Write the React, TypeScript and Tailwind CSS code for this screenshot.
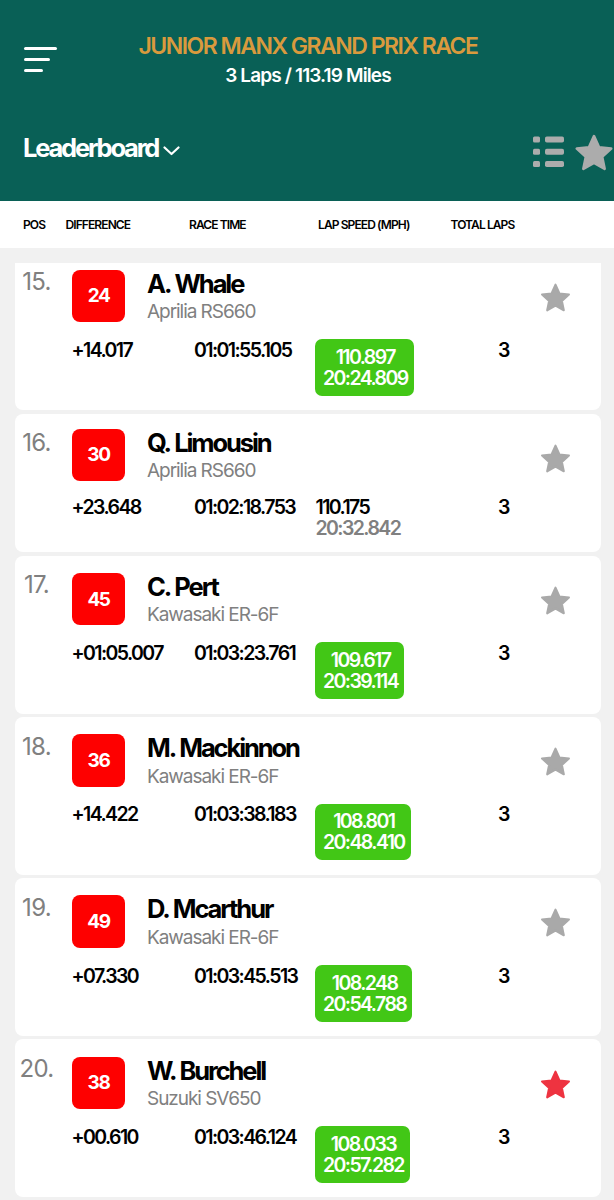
import React, { useState } from "react";

type Rider = {
  pos: number;
  number: number;
  name: string;
  bike: string;
  difference: string;
  raceTime: string;
  speed: string;
  lapTime: string;
  personalBest: boolean;
  laps: number;
};

const riders: Rider[] = [
  { pos: 15, number: 24, name: "A. Whale", bike: "Aprilia RS660", difference: "+14.017", raceTime: "01:01:55.105", speed: "110.897", lapTime: "20:24.809", personalBest: true, laps: 3 },
  { pos: 16, number: 30, name: "Q. Limousin", bike: "Aprilia RS660", difference: "+23.648", raceTime: "01:02:18.753", speed: "110.175", lapTime: "20:32.842", personalBest: false, laps: 3 },
  { pos: 17, number: 45, name: "C. Pert", bike: "Kawasaki ER-6F", difference: "+01:05.007", raceTime: "01:03:23.761", speed: "109.617", lapTime: "20:39.114", personalBest: true, laps: 3 },
  { pos: 18, number: 36, name: "M. Mackinnon", bike: "Kawasaki ER-6F", difference: "+14.422", raceTime: "01:03:38.183", speed: "108.801", lapTime: "20:48.410", personalBest: true, laps: 3 },
  { pos: 19, number: 49, name: "D. Mcarthur", bike: "Kawasaki ER-6F", difference: "+07.330", raceTime: "01:03:45.513", speed: "108.248", lapTime: "20:54.788", personalBest: true, laps: 3 },
  { pos: 20, number: 38, name: "W. Burchell", bike: "Suzuki SV650", difference: "+00.610", raceTime: "01:03:46.124", speed: "108.033", lapTime: "20:57.282", personalBest: true, laps: 3 },
];

const Star = ({ className }: { className: string }) => (
  <svg className={className} viewBox="0 0 30 28" fill="currentColor" stroke="currentColor" strokeWidth="2" strokeLinejoin="round">
    <path d="M15 1.6 18.82 10.04 28.03 11.07 21.18 17.31 23.05 26.38 15 21.8 6.95 26.38 8.82 17.31 1.97 11.07 11.18 10.04Z" />
  </svg>
);

const Header = () => {
  return (
    <header className="h-[201px] bg-[#096056] text-white">
      <div className="flex h-[94px] pl-6">
        <button aria-label="Menu" className="flex h-[74px] w-[34px] flex-col items-start gap-[8px] pt-[47px]">
          <span className="h-[3px] w-[33px] shrink-0 rounded-full bg-white" />
          <span className="h-[3px] w-[26px] shrink-0 rounded-full bg-white" />
          <span className="h-[3px] w-[19px] shrink-0 rounded-full bg-white" />
        </button>
        <div className="flex-1 pt-[32px] pr-[56px] text-center">
          <h1 className="text-[23px] leading-[28px] font-semibold tracking-[-1.5px] whitespace-nowrap text-[#d99a3d]">
            JUNIOR MANX GRAND PRIX RACE
          </h1>
          <p className="mt-[5px] text-[19px] leading-[22px] font-semibold tracking-[-0.87px]">
            3 Laps / 113.19 Miles
          </p>
        </div>
      </div>

      <div className="flex items-start justify-between pl-[23px]">
        <button className="mt-[38px] flex items-center text-[25.5px] leading-[32px] font-bold tracking-[-2.2px]">
          Leaderboard
          <svg className="mt-[5px] ml-[5px] h-[10px] w-[17px]" viewBox="0 0 17 10" fill="none" stroke="white" strokeWidth="2.2" strokeLinecap="round" strokeLinejoin="round">
            <path d="M1.5 1.5 8.5 8l7-6.5" />
          </svg>
        </button>
        <div className="flex pt-[40px] pr-[0.5px] text-[#acacac]">
          <svg className="mt-[2px] mr-[10px] h-[32px] w-[31px]" viewBox="0 0 31 32" fill="currentColor">
            <rect x="0" y="0.5" width="7" height="6" rx="1.5" />
            <rect x="12" y="0.5" width="19" height="6" rx="1.8" />
            <rect x="0" y="12.8" width="7" height="6" rx="1.5" />
            <rect x="12" y="12.8" width="19" height="6" rx="1.8" />
            <rect x="0" y="25" width="7" height="6" rx="1.5" />
            <rect x="12" y="25" width="19" height="6" rx="1.8" />
          </svg>
          <Star className="h-[37px] w-[40px]" />
        </div>
      </div>
    </header>
  );
};

const ColumnTitles = () => {
  return (
    <div className="flex h-[47px] items-center bg-white pl-[23px] text-[12px] font-semibold tracking-[-0.9px] whitespace-nowrap">
      <span className="w-[42.5px]">POS</span>
      <span className="w-[123.5px]">DIFFERENCE</span>
      <span className="w-[129px]">RACE TIME</span>
      <span className="w-[132.5px]">LAP SPEED (MPH)</span>
      <span>TOTAL LAPS</span>
    </div>
  );
};

const RiderCard = ({
  rider,
  favourite,
  onToggle,
}: {
  rider: Rider;
  favourite: boolean;
  onToggle: () => void;
}) => {
  return (
    <li className={`shrink-0 rounded-[8px] bg-white ${rider.personalBest ? "h-[158px] pt-[17.2px]" : "h-[138.7px] pt-[15px]"}`}>
      <div className="flex h-[52.5px]">
        <div className={`w-[43px] text-center text-[24px] leading-[28px] tracking-[-0.03em] text-[#808080] ${rider.personalBest ? "-mt-[1.5px]" : "mt-0"}`}>
          {rider.pos}.
        </div>
        <div className="ml-[14px] flex h-[52.5px] w-[53px] items-center justify-center rounded-[8px] bg-[#fe0000] pt-[1.5px] text-[19px] font-bold tracking-[-1.4px] text-white">
          {rider.number}
        </div>
        <div className="ml-[22px] w-[393px] whitespace-nowrap">
          <h2 className="-mt-px text-[25.5px] leading-[29px] font-bold tracking-[-2.1px] [word-spacing:1px]">{rider.name}</h2>
          <p className="mt-[2.5px] text-[19px] leading-[24px] tracking-[-1.05px] text-[#808080]">{rider.bike}</p>
        </div>
        <button
          aria-label="Toggle favourite"
          onClick={onToggle}
          className={`flex h-[55px] items-center ${favourite ? "text-[#ee3340]" : "text-[#a9a9a9]"} ${rider.personalBest ? "" : "pt-[4px]"}`}
        >
          <Star className="h-[29px] w-[31px]" />
        </button>
      </div>

      <div className={`flex pl-[56.5px] text-[19.5px] leading-[21px] font-semibold tracking-[-1.6px] ${rider.personalBest ? "pt-[17.7px]" : "pt-[15.5px]"}`}>
        <span className="w-[122.5px]">{rider.difference}</span>
        <span className="w-[121px]">{rider.raceTime}</span>
        <div className="w-[183px]">
          {rider.personalBest ? (
            <div className="-mt-[0.5px] inline-block rounded-[7px] bg-[#42c716] pt-[7.5px] pr-[6px] pb-[7px] pl-[8px] text-center text-white">
              <div>{rider.speed}</div>
              <div>{rider.lapTime}</div>
            </div>
          ) : (
            <div className="pl-[0.5px]">
              <div>{rider.speed}</div>
              <div className="text-[#808080]">{rider.lapTime}</div>
            </div>
          )}
        </div>
        <span>{rider.laps}</span>
      </div>
    </li>
  );
};

const App = () => {
  const [favourites, setFavourites] = useState<number[]>([38]);

  const toggleFavourite = (number: number) => {
    setFavourites((current) =>
      current.includes(number)
        ? current.filter((n) => n !== number)
        : [...current, number]
    );
  };

  return (
    <div className="flex h-[1200px] w-[614px] flex-col overflow-hidden bg-[#f1f1f1] font-['Inter','Liberation_Sans',sans-serif] text-black">
      <Header />
      <ColumnTitles />
      <main className="mt-[15px] mr-[13px] ml-[15px] flex-1 overflow-hidden">
        <ul className="mt-[-10.7px] flex flex-col gap-[3.3px]">
          {riders.map((rider) => (
            <RiderCard
              key={rider.number}
              rider={rider}
              favourite={favourites.includes(rider.number)}
              onToggle={() => toggleFavourite(rider.number)}
            />
          ))}
        </ul>
      </main>
    </div>
  );
};

export default App;
